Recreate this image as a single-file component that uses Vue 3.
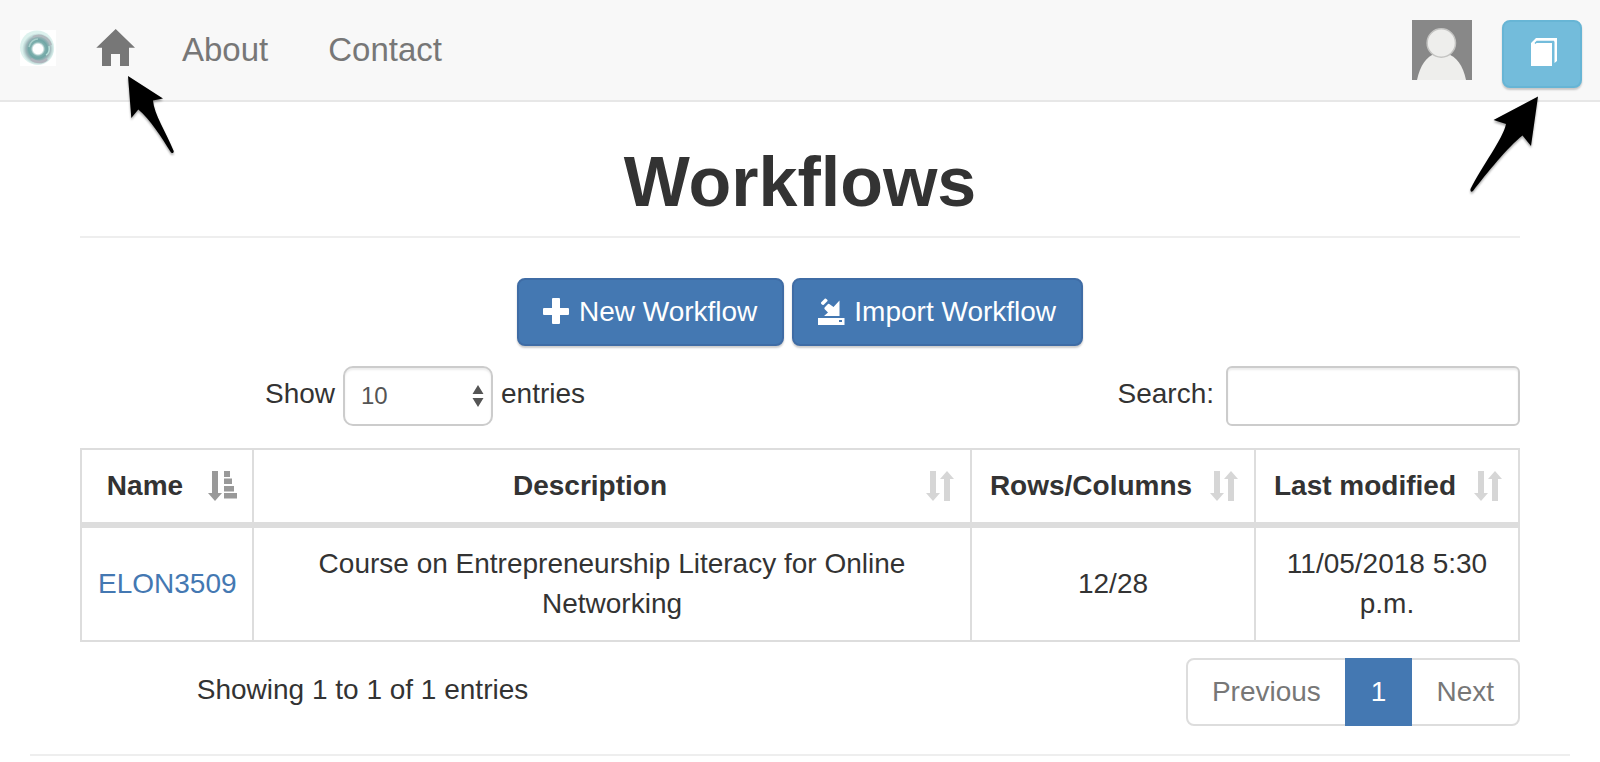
<script setup>
import { ref } from 'vue'

const pageSize = ref('10')
const search = ref('')
const columns = [
  { key: 'name', label: 'Name', sorted: true },
  { key: 'description', label: 'Description', sorted: false },
  { key: 'size', label: 'Rows/Columns', sorted: false },
  { key: 'modified', label: 'Last modified', sorted: false },
]
const workflows = [
  {
    name: 'ELON3509',
    description: 'Course on Entrepreneurship Literacy for Online Networking',
    size: '12/28',
    modified: '11/05/2018 5:30 p.m.',
  },
]
</script>

<template>
  <div class="page">
    <nav class="navbar">
      <a href="#" class="logo" aria-label="Start page">
        <svg width="36" height="36" viewBox="0 0 36 36">
          <defs>
            <radialGradient id="ring">
              <stop offset="0.3" stop-color="#fff" />
              <stop offset="0.44" stop-color="#7fb0ae" />
              <stop offset="0.58" stop-color="#70a6a5" />
              <stop offset="0.76" stop-color="#a0b5b9" />
              <stop offset="0.88" stop-color="#c0dad8" />
              <stop offset="1" stop-color="#e0f3f0" />
            </radialGradient>
          </defs>
          <rect width="36" height="36" fill="#fff" />
          <circle cx="17" cy="17.500" r="17" fill="#ddf2ee" />
          <circle cx="18" cy="19" r="16" fill="url(#ring)" />
          <path d="M9 17c1-5 5-8 9-8" fill="none" stroke="#a9cfcb" stroke-width="1.500" />
          <path d="M29 16c1 5-1 8-3 9" fill="none" stroke="#b9e0da" stroke-width="1.500" />
          <path d="M13 7c8-4 16 1 18 8" fill="none" stroke="#b2b9be" stroke-width="2" />
          <path d="M11 29c5 4 12 4 16 0" fill="none" stroke="#b0b3bc" stroke-width="2.500" />
        </svg>
      </a>
      <div class="nav-item home-item">
        <a href="#" class="nav-link home-link" aria-label="Home">
          <svg width="40" height="38" viewBox="0 0 40 38">
            <path d="M19.700 0 39 18.700H33V37H24V25H15V37H6V18.700H.300Z" fill="currentColor" />
          </svg>
        </a>
        <svg class="pointer pointer-home" width="52" height="84" viewBox="0 0 52 84">
          <path d="M3 2 38 24.500 28 26.500C29 40 41 58 48.700 77Q49 80 46 78.500C37 64 25 45 13.300 35.500L6.300 44Z" />
        </svg>
      </div>
      <a href="#" class="nav-link">About</a>
      <a href="#" class="nav-link">Contact</a>
      <a href="#" class="avatar" aria-label="Profile">
        <svg width="60" height="60" viewBox="0 0 60 60">
          <rect width="60" height="60" fill="#888" />
          <path d="M5 60C8 45 15 36 23 34H35C44 36 51 45 54 60Z" fill="#eeeeec" />
          <circle cx="29.300" cy="23" r="14.200" fill="#eeeeec" stroke="#c4c4c2" stroke-width="1.500" />
        </svg>
      </a>
      <div class="nav-item">
        <button type="button" class="btn btn-info" aria-label="Documentation">
          <svg width="28" height="28" viewBox="0 0 28 28">
            <path d="M8 0H29V23L26.500 25V3.500H9L7 5H24V28H3V5Z" fill="#fff" />
            <path d="M7 5.500 9 3.500H26" fill="none" stroke="#73bcdb" stroke-width="1.500" />
          </svg>
        </button>
        <svg class="pointer pointer-docs" width="74" height="102" viewBox="0 0 74 102">
          <path d="M70 2.500 25.500 26 38 30C35 45 14 72 2.500 95Q2 99 5 97C19 79 40 53 54.500 41.500L63 52Z" />
        </svg>
      </div>
    </nav>

    <main class="container">
      <h1>Workflows</h1>

      <div class="actions">
        <button type="button" class="btn btn-primary">
          <svg width="28" height="28" viewBox="0 0 28 28">
            <path d="M10 0H16Q17 0 17 1V10H25Q26 10 26 11V16Q26 17 25 17H17V25Q17 26 16 26H10Q9 26 9 25V17H1Q0 17 0 16V11Q0 10 1 10H9V1Q9 0 10 0Z" fill="#fff" />
          </svg>
          New Workflow
        </button>
        <button type="button" class="btn btn-primary">
          <svg width="28" height="28" viewBox="0 0 28 28">
            <path d="M3 4.500 7 .500Q8 0 9.500 2L9.500 3 5.500 7Q4 7 3 5.500ZM21.500 2.500V18H6L10 14.500 6.500 11Q6 10 7 9L10 6Q11 5.500 12 6.500L15.500 9ZM0 20H26.500V27H0ZM21 22V24H24V22Z" fill="#fff" fill-rule="evenodd" />
          </svg>
          Import Workflow
        </button>
      </div>

      <div class="controls">
        <div class="length">
          <label for="page-size">Show</label>
          <span class="select-box">
            <select id="page-size" v-model="pageSize">
              <option>10</option>
              <option>25</option>
              <option>50</option>
              <option>100</option>
            </select>
            <svg class="select-arrows" width="12" height="22" viewBox="0 0 12 22">
              <path d="M6 0 11.500 9H.500ZM6 22 .500 13H11.500Z" fill="#555" />
            </svg>
          </span>
          <span>entries</span>
        </div>
        <div class="filter">
          <label for="search">Search:</label>
          <input id="search" v-model="search" type="search" />
        </div>
      </div>

      <table>
        <colgroup>
          <col v-for="c in columns" :key="c.key" :class="'col-' + c.key" />
        </colgroup>
        <thead>
          <tr>
            <th v-for="c in columns" :key="c.key" scope="col" :aria-sort="c.sorted ? 'ascending' : 'none'">
              <button type="button" class="sort">
                {{ c.label }}
                <svg v-if="c.sorted" class="sort-icon sorted" width="30" height="30" viewBox="0 0 30 30">
                  <path d="M4 0H10V22H14L7 30 0 22H4ZM16 0H22V6H16ZM16 7.500H24V13H16ZM16 15H26V20.500H16ZM16 22H29V27.500H16Z" fill="currentColor" />
                </svg>
                <svg v-else class="sort-icon" width="30" height="30" viewBox="0 0 30 30">
                  <path d="M4 0H10V22H14L7 30 0 22H4ZM21 0 28 8H24V30H18V8H14Z" fill="currentColor" />
                </svg>
              </button>
            </th>
          </tr>
        </thead>
        <tbody>
          <tr v-for="w in workflows" :key="w.name">
            <td><a href="#">{{ w.name }}</a></td>
            <td>{{ w.description }}</td>
            <td>{{ w.size }}</td>
            <td>{{ w.modified }}</td>
          </tr>
        </tbody>
      </table>

      <div class="table-footer">
        <div class="info">Showing 1 to 1 of 1 entries</div>
        <div class="pagination">
          <a href="#" class="page-link">Previous</a>
          <a href="#" class="page-link active" aria-current="page">1</a>
          <a href="#" class="page-link">Next</a>
        </div>
      </div>
    </main>
    <hr class="bottom-rule" />
  </div>
</template>

<style>
body {
  margin: 0;
  background: #fff;
}
</style>

<style scoped>
.page {
  font-family: "Liberation Sans", Arial, sans-serif;
  font-size: 28px;
  line-height: 40px;
  color: #333;
}
.page *,
.page {
  box-sizing: border-box;
}
svg {
  display: block;
  flex: none;
  overflow: visible;
}
button,
input,
select {
  font-family: inherit;
}
a {
  color: #4478b2;
  text-decoration: none;
}

.navbar {
  display: flex;
  align-items: flex-start;
  height: 102px;
  padding: 20px 18px 0 20px;
  background: #f8f8f8;
  border-bottom: 2px solid #e7e7e7;
}
.logo {
  margin-top: 10px;
}
.nav-item {
  position: relative;
}
.home-item {
  margin: 0 16px 0 10px;
}
.nav-link {
  display: block;
  padding: 10px 30px;
  font-size: 33px;
  color: #777;
}
.home-link {
  padding: 9px 0 9px 30px;
}
.avatar {
  margin-left: auto;
  margin-right: 30px;
}
.pointer {
  position: absolute;
  z-index: 2;
  pointer-events: none;
  filter: drop-shadow(0 2px 1px rgba(0, 0, 0, 0.35));
}
.pointer-home {
  top: 54px;
  left: 59px;
}
.pointer-docs {
  top: 74px;
  right: 40px;
}

.btn {
  display: flex;
  align-items: center;
  gap: 8px;
  padding: 12px 24px;
  border: 2px solid;
  border-radius: 8px;
  font-size: 28px;
  line-height: 40px;
  color: #fff;
  box-shadow: 0 2px 2px rgba(0, 0, 0, 0.2);
  cursor: pointer;
}
.btn-primary {
  padding: 12px 25px 12px 24px;
  background: #4478b2;
  border-color: #3f6ca5;
}
.btn-info {
  height: 68px;
  padding-bottom: 16px;
  background: #73bcdb;
  border-color: #67b5d5;
}

.container {
  padding: 0 80px;
}
h1 {
  margin: 0;
  padding: 41px 0 15px;
  border-bottom: 2px solid #eee;
  font-size: 70px;
  line-height: 78px;
  font-weight: 700;
  text-align: center;
}
.actions {
  display: flex;
  justify-content: center;
  gap: 8px;
  margin-top: 40px;
}

.controls {
  display: grid;
  grid-template-columns: 1fr 1fr;
  margin: 20px -30px 0;
}
.length,
.filter {
  display: flex;
  align-items: center;
  padding: 0 30px;
}
.length {
  justify-content: center;
  gap: 8px;
}
.filter {
  justify-content: flex-end;
  gap: 12px;
}
.length > label,
.length > span:last-child,
.filter > label {
  padding-bottom: 4px;
}
.select-box {
  position: relative;
}
select,
input {
  display: block;
  height: 60px;
  margin: 0;
  padding: 10px 16px;
  border: 2px solid #ccc;
  background: #fff;
  font-size: 24px;
  line-height: 36px;
  color: #555;
  box-shadow: inset 0 2px 2px rgba(0, 0, 0, 0.075);
  appearance: none;
}
select {
  width: 150px;
  border-radius: 10px;
}
input {
  width: 294px;
  border-radius: 6px;
}
.select-arrows {
  position: absolute;
  top: 19px;
  right: 9px;
  pointer-events: none;
}

table {
  width: 100%;
  margin-top: 22px;
  table-layout: fixed;
  border-collapse: separate;
  border-spacing: 0;
  border: 0 solid #ddd;
  border-width: 2px 0 0 2px;
  text-align: center;
}
.col-name {
  width: 172px;
}
.col-size {
  width: 284px;
}
.col-modified {
  width: 264px;
}
th,
td {
  border: 0 solid #ddd;
  border-width: 0 2px 2px 0;
}
th {
  padding: 0;
  border-bottom-width: 6px;
}
td {
  padding: 16px;
  vertical-align: middle;
}
.sort {
  position: relative;
  display: block;
  width: 100%;
  padding: 16px 60px 16px 16px;
  border: 0;
  background: none;
  font-size: 28px;
  font-weight: 700;
  line-height: 40px;
  color: #333;
  white-space: nowrap;
  cursor: pointer;
}
.sort-icon {
  position: absolute;
  top: 21px;
  right: 14px;
  color: #d6d6d6;
}
.sorted {
  color: #999;
}

.table-footer {
  display: grid;
  grid-template-columns: 5fr 7fr;
  margin: 16px -30px 0;
}
.info {
  padding-top: 12px;
  text-align: center;
}
.pagination {
  display: flex;
  justify-content: flex-end;
  padding-right: 30px;
}
.page-link {
  margin-left: -2px;
  padding: 12px 24px;
  border: 2px solid #ddd;
  color: #777;
}
.page-link:first-child {
  border-radius: 8px 0 0 8px;
}
.page-link:last-child {
  border-radius: 0 8px 8px 0;
}
.page-link.active {
  position: relative;
  z-index: 1;
  border-color: #4478b2;
  background: #4478b2;
  color: #fff;
}
.bottom-rule {
  margin: 28px 30px 0;
  border: 0;
  border-top: 2px solid #eee;
}
</style>
